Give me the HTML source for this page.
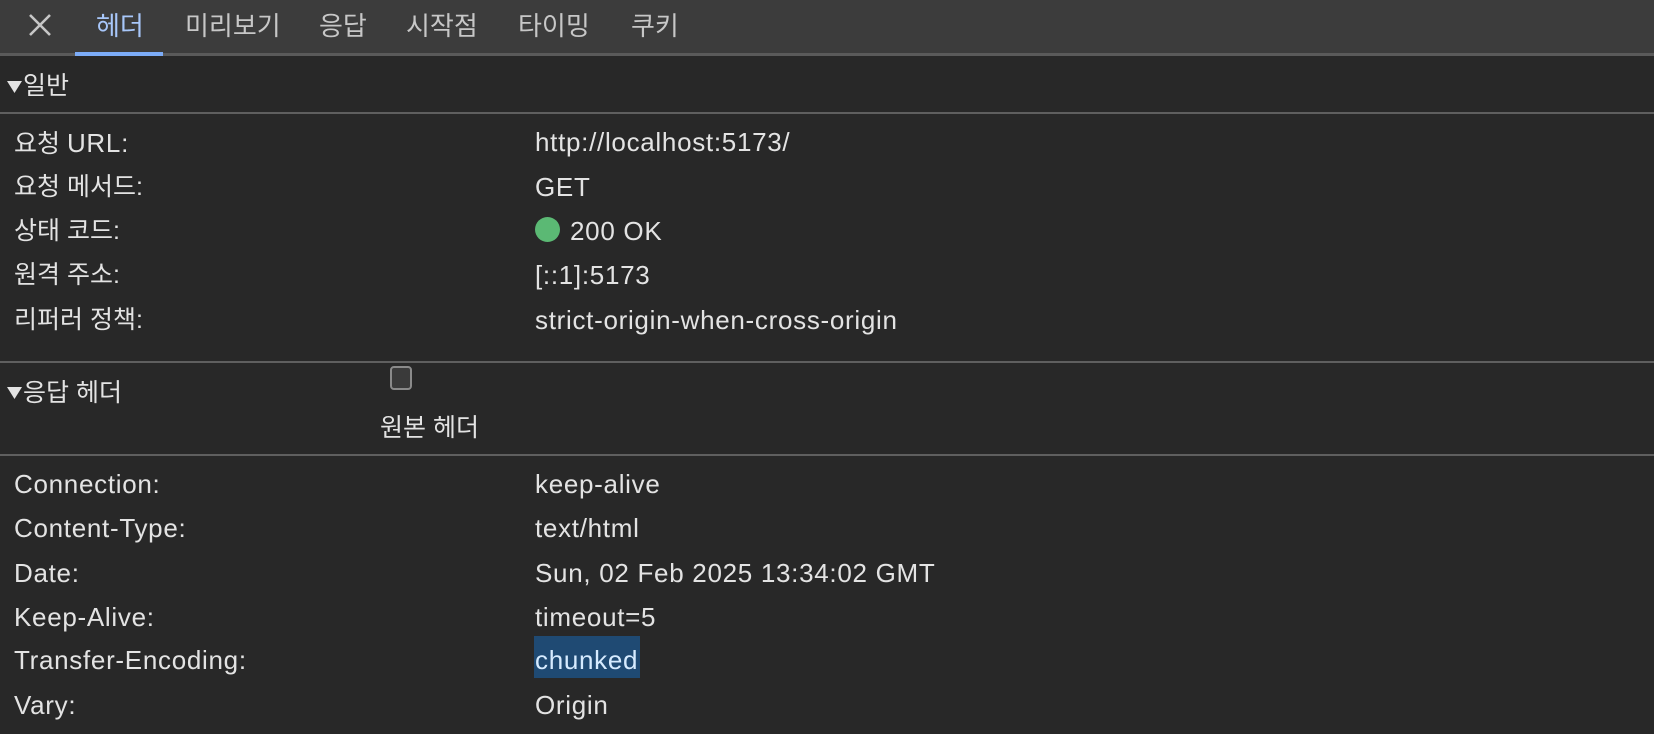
<!DOCTYPE html>
<html><head><meta charset="utf-8"><style>
html,body{margin:0;padding:0}
body{width:1654px;height:734px;background:#282828;position:relative;overflow:hidden;font-family:"Liberation Sans","Noto Sans CJK KR",sans-serif;color:#e3e3e3;font-size:25px;}
.t{position:absolute;line-height:1;white-space:nowrap}
.l{font-size:26px;letter-spacing:0.7px}
.bar{position:absolute;left:0;top:0;width:1654px;height:53px;background:#3c3c3c}
.sep{position:absolute;left:0;width:1654px;height:2px;background:#5f5f5f}
.tab{position:absolute;line-height:1;font-size:26px;color:#c7c7c7;top:13px}
.tri{position:absolute;left:7px}
</style></head><body>
<div class="bar"></div>
<div class="sep" style="top:53px;height:3px;background:#5a5a5a"></div>
<div style="position:absolute;left:75px;top:52px;width:88px;height:4px;background:#7cacf8"></div>
<svg style="position:absolute;left:28px;top:13px" width="24" height="24" viewBox="0 0 24 24"><path d="M2 2L22 22M22 2L2 22" stroke="#c7c7c7" stroke-width="2.6"/></svg>
<div class="tab" style="left:96px;color:#a8c7fa">헤더</div>
<div class="tab" style="left:185px">미리보기</div>
<div class="tab" style="left:319px">응답</div>
<div class="tab" style="left:406px">시작점</div>
<div class="tab" style="left:518px">타이밍</div>
<div class="tab" style="left:631px">쿠키</div>

<svg class="tri" style="top:80px" width="15" height="14" viewBox="0 0 15 14"><polygon points="0,1 15,1 7.5,13" fill="#e3e3e3"/></svg>
<div class="t" style="left:23px;top:74px">일반</div>
<div class="sep" style="top:112px"></div>
<div class="t" style="left:14px;top:130px">요청 <span class="l">URL:</span></div><div class="t l" style="left:535px;top:129px">http://localhost:5173/</div>
<div class="t" style="left:14px;top:175px">요청 메서드:</div><div class="t l" style="left:535px;top:174px">GET</div>
<div class="t" style="left:14px;top:219px">상태 코드:</div>
<div style="position:absolute;left:535px;top:217px;width:25px;height:25px;border-radius:50%;background:#5bb974"></div>
<div class="t l" style="left:570px;top:218px">200 OK</div>
<div class="t" style="left:14px;top:263px">원격 주소:</div><div class="t l" style="left:535px;top:262px">[::1]:5173</div>
<div class="t" style="left:14px;top:308px">리퍼러 정책:</div><div class="t l" style="left:535px;top:307px">strict-origin-when-cross-origin</div>
<div class="sep" style="top:361px"></div>
<svg class="tri" style="top:386px" width="15" height="14" viewBox="0 0 15 14"><polygon points="0,1 15,1 7.5,13" fill="#e3e3e3"/></svg>
<div class="t" style="left:23px;top:381px">응답 헤더</div>
<div style="position:absolute;left:390px;top:366px;width:18px;height:20px;border:2px solid #8a8a8a;border-radius:4px;background:#3a3a3a"></div>
<div class="t" style="left:380px;top:416px">원본 헤더</div>
<div class="sep" style="top:454px"></div>
<div class="t l" style="left:14px;top:471px">Connection:</div><div class="t l" style="left:535px;top:471px">keep-alive</div>
<div class="t l" style="left:14px;top:515px">Content-Type:</div><div class="t l" style="left:535px;top:515px">text/html</div>
<div class="t l" style="left:14px;top:560px">Date:</div><div class="t l" style="left:535px;top:560px">Sun, 02 Feb 2025 13:34:02 GMT</div>
<div class="t l" style="left:14px;top:604px">Keep-Alive:</div><div class="t l" style="left:535px;top:604px">timeout=5</div>
<div style="position:absolute;left:534px;top:636px;width:106px;height:42px;background:#1f4a73"></div>
<div class="t l" style="left:14px;top:647px">Transfer-Encoding:</div><div class="t l" style="left:535px;top:647px;color:#d6ebff">chunked</div>
<div class="t l" style="left:14px;top:692px">Vary:</div><div class="t l" style="left:535px;top:692px">Origin</div>
</body></html>
